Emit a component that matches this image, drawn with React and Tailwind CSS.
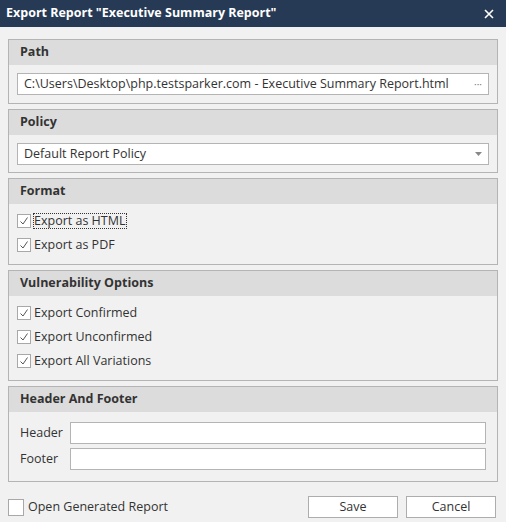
const Check = ({ on = true }) => (
  <span className="w-[14px] h-[14px] border border-[#a8a8a8] bg-white flex items-center justify-center shrink-0">
    {on && (
      <svg width="10" height="10" viewBox="0 0 10 10"><path d="M1.5 5.5 L4 8 L8.5 1.5" stroke="#555" strokeWidth="1" fill="none" /></svg>
    )}
  </span>
);

const Group = ({ title, children, bodyClass }) => (
  <div className="border border-[#b4b4b4] bg-[#f1f1f1]">
    <div className="h-[25px] bg-[#dcdcdc] flex items-center px-[11px] font-bold text-[12.5px] text-[#333]">{title}</div>
    <div className={bodyClass}>{children}</div>
  </div>
);

const Row = ({ label, focus }) => (
  <div className="flex items-center h-[24px] gap-[3px]">
    <Check />
    <span className={focus ? "outline outline-1 outline-dotted outline-[#333] leading-[14px]" : ""}>{label}</span>
  </div>
);

export default function App() {
  return (
    <div className="w-[506px] h-[522px] bg-[#f1f1f1] flex flex-col text-[12.5px] text-[#333]" style={{ fontFamily: '"Open Sans", "Noto Sans", sans-serif' }}>
      <div className="h-[27px] bg-[#263a55] flex items-center justify-between px-[6px] text-white font-bold text-[12.5px]">
        <span>Export Report "Executive Summary Report"</span>
        <svg width="10" height="10" viewBox="0 0 10 10" className="mr-[6px]"><path d="M1 1 L9 9 M9 1 L1 9" stroke="white" strokeWidth="1.6" /></svg>
      </div>
      <div className="flex flex-col gap-[5px] px-[8px] pt-[12px]">
        <Group title="Path" bodyClass="px-[8px] pt-[8px] pb-[8px]">
          <div className="h-[22px] bg-white border border-[#b4b4b4] flex items-center justify-between pl-[6px] pr-[6px]">
            <span>C:\Users\Desktop\php.testsparker.com - Executive Summary Report.html</span>
            <span className="text-[10px] text-[#777] leading-none">···</span>
          </div>
        </Group>
        <Group title="Policy" bodyClass="px-[8px] pt-[8px] pb-[7px]">
          <div className="h-[22px] bg-white border border-[#b4b4b4] flex items-center justify-between pl-[6px] pr-[6px]">
            <span>Default Report Policy</span>
            <svg width="7" height="4" viewBox="0 0 7 4"><path d="M0 0 H7 L3.5 4 Z" fill="#888" /></svg>
          </div>
        </Group>
        <Group title="Format" bodyClass="px-[8px] pt-[5px] pb-[7px]">
          <Row label="Export as HTML" focus />
          <Row label="Export as PDF" />
        </Group>
        <Group title="Vulnerability Options" bodyClass="px-[8px] pt-[5px] pb-[7px]">
          <Row label="Export Confirmed" />
          <Row label="Export Unconfirmed" />
          <Row label="Export All Variations" />
        </Group>
        <Group title="Header And Footer" bodyClass="pl-[11px] pr-[11px] pt-[10px] pb-[11px] flex flex-col gap-[4px]">
          {["Header", "Footer"].map((l) => (
            <div key={l} className="flex items-center">
              <span className="w-[50px]">{l}</span>
              <div className="flex-1 h-[22px] bg-white border border-[#b4b4b4]" />
            </div>
          ))}
        </Group>
      </div>
      <div className="flex items-center justify-between px-[8px] mt-[14px]">
        <div className="flex items-center gap-[4px]">
          <span className="w-[16px] h-[17px] border border-[#a8a8a8] bg-white" />
          <span>Open Generated Report</span>
        </div>
        <div className="flex gap-[8px] mr-[2px]">
          <button className="w-[90px] h-[22px] border border-[#adadad] bg-white">Save</button>
          <button className="w-[90px] h-[22px] border border-[#adadad] bg-white">Cancel</button>
        </div>
      </div>
    </div>
  );
}
